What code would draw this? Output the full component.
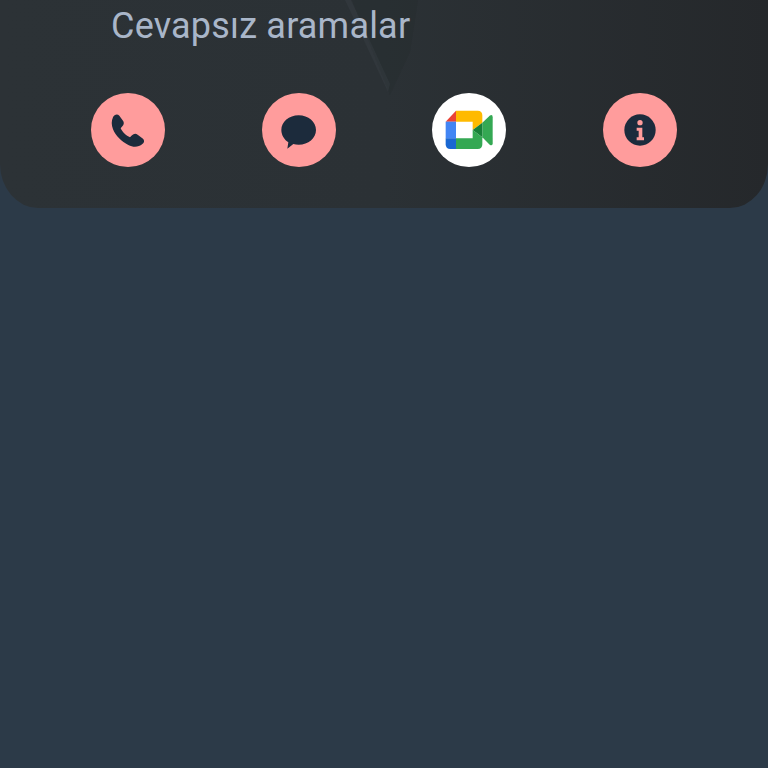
<div class="page">
  <section class="panel">
    <svg class="wallpaper" viewBox="0 0 768 208" aria-hidden="true">
      <path d="M352 0 L390 95 L410 52 L418 0 Z" fill="#1f2225" opacity="0.14" />
      <path d="M345 0 L388 92 L390 84 L351 0 Z" fill="#3f464b" opacity="0.3" />
    </svg>
    <h1 class="title">Cevapsız aramalar</h1>
    <div class="actions">
      <button class="action" aria-label="Ara">
        <svg viewBox="33 39 222 222">
          <path class="ink" d="M99 112 C103 102 113 101 118 107 L130 124 C133 130 131 135 127 139 L122 145 C126 155 139 168 150 172 L156 166 C161 161 167 160 173 164 L189 176 C194 181 193 188 187 192 C176 202 160 203 145 195 C125 185 107 168 99 148 C94 135 94 122 99 112 Z" />
        </svg>
      </button>
      <button class="action" aria-label="Mesaj">
        <svg viewBox="546 39 222 222">
          <path class="ink" d="M656 106 C685 106 708 126 708 150 C708 175 685 194 656 194 C650 194 645 193 640 192 L622 206 L625 187 C614 180 604 166 604 150 C604 126 627 106 656 106 Z" />
        </svg>
      </button>
      <button class="action meet" aria-label="Meet">
        <svg viewBox="36 39 222 222">
          <path fill="#ea4335" d="M77 125 L108 92 V125 Z" />
          <path fill="#ffba00" d="M108 92 H173 Q187 92 187 106 V128 L158 150 V125 H108 Z" />
          <path fill="#4285f4" d="M77 125 H108 V175 H77 Z" />
          <path fill="#1967d2" d="M77 175 H108 V207 H91 Q77 207 77 193 Z" />
          <path fill="#34a853" d="M108 175 H158 V150 L187 172 V193 Q187 207 173 207 H108 Z" />
          <path fill="#34a853" d="M187 128 L209 107 Q218 102 218 112 V190 Q218 199 209 194 L187 172 Z" />
          <path fill="#188038" d="M158 150 L187 128 V172 Z" />
        </svg>
      </button>
      <button class="action" aria-label="Bilgi">
        <svg viewBox="39 39 222 222">
          <circle class="ink" cx="150" cy="150" r="47" />
          <circle class="mark" cx="150" cy="128" r="8" />
          <path class="mark" d="M140 143 H157 V172 H162 V181 H140 V172 H146 V152 H140 Z" />
        </svg>
      </button>
    </div>
  </section>
</div>

<style>
  :global(body) {
    margin: 0;
    background: #2c3a48;
  }

  .page {
    min-height: 768px;
    background: #2c3a48;
  }

  .panel {
    position: relative;
    box-sizing: border-box;
    height: 208px;
    padding: 5px 0 0 91px;
    overflow: hidden;
    border-radius: 0 0 38px 38px / 0 0 44px 44px;
    background: linear-gradient(90deg, #2c3236 0%, #2b3135 50%, #25282b 100%);
  }

  .wallpaper {
    position: absolute;
    inset: 0;
    width: 100%;
    height: 100%;
  }

  .title {
    position: relative;
    margin: 0 0 0 20px;
    color: #a9b6c9;
    font-family: Roboto, sans-serif;
    font-size: 36px;
    font-weight: 400;
    line-height: 42px;
    letter-spacing: 0.2px;
  }

  .actions {
    position: relative;
    display: flex;
    gap: 96.67px;
    margin-top: 46px;
  }

  .action {
    flex: none;
    width: 74px;
    height: 74px;
    padding: 0;
    border: 0;
    border-radius: 50%;
    background: #ff9c9c;
  }

  .meet {
    background: #fff;
  }

  svg {
    display: block;
    width: 100%;
    height: 100%;
  }

  .ink {
    fill: #1c2b3c;
  }

  .mark {
    fill: #ff9c9c;
  }
</style>
